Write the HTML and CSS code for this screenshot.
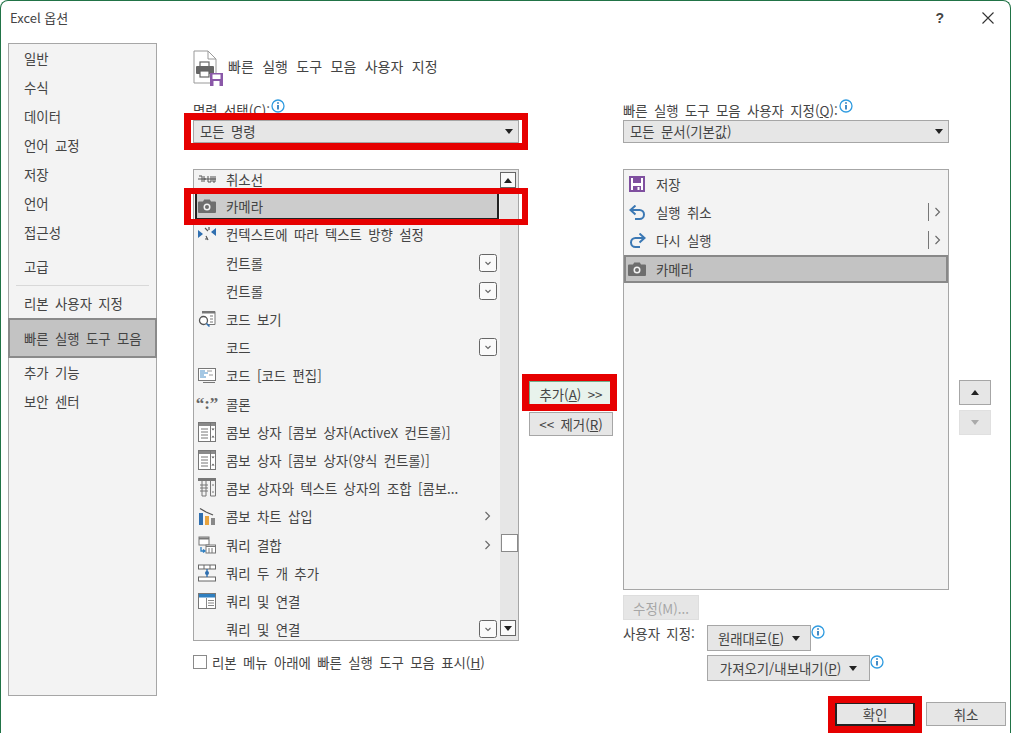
FILE: index.html
```html
<!DOCTYPE html>
<html lang="ko">
<head>
    <meta charset="UTF-8">
    <title>Excel 옵션</title>
    <link rel="stylesheet" href="styles.css">
</head>
<body>
<svg class="defs" width="0" height="0">
    <symbol id="camera" viewBox="0 0 18 14">
        <path d="M1 2.500h4l1.200-2h5.600l1.200 2h4a1 1 0 0 1 1 1V13a1 1 0 0 1-1 1H1a1 1 0 0 1-1-1V3.500a1 1 0 0 1 1-1z" fill="#6e6e6e"/>
        <circle cx="9" cy="8" r="3.500" fill="#f3f3f3"/>
        <circle cx="9" cy="8" r="2" fill="#6e6e6e"/>
    </symbol>
    <symbol id="combo" viewBox="0 0 18 20">
        <rect x="0.500" y="0.500" width="17" height="19" fill="#fff" stroke="#777"/>
        <rect x="1" y="1" width="16" height="3" fill="#8a8a8a"/>
        <path d="M3 7h7M3 10h7M3 13h7M3 16h7" stroke="#777"/>
        <path d="M12.500 1v18" stroke="#777"/>
        <path d="M13.500 6.500h3l-1.500 2zM13.500 15.500h3l-1.500-2z" fill="#555"/>
    </symbol>
    <symbol id="info" viewBox="0 0 14 14">
        <circle cx="7" cy="7" r="6" fill="#fff" stroke="#2f9be0" stroke-width="1.300"/>
        <path d="M7 6v4.500" stroke="#2f7fc0" stroke-width="1.800"/>
        <path d="M7 3.200v1.600" stroke="#2f7fc0" stroke-width="1.800"/>
    </symbol>
    <symbol id="chev-down" viewBox="0 0 18 18">
        <rect x="0.500" y="0.500" width="17" height="17" rx="2" fill="#fafafa" stroke="#666"/>
        <path d="M6.500 8l2.500 2.500L11.500 8" fill="none" stroke="#666" stroke-width="1.100"/>
    </symbol>
    <symbol id="chev-right" viewBox="0 0 8 10">
        <path d="M1.500 1l4 4-4 4" fill="none" stroke="#666" stroke-width="1.100"/>
    </symbol>
</svg>

<div class="dialog">
    <div class="titlebar">
        <span class="title">Excel 옵션</span>
        <span class="help">?</span>
        <svg class="close" width="12" height="12" viewBox="0 0 12 12"><path d="M.5.500l11 11M11.500.500l-11 11" stroke="#333" stroke-width="1.100"/></svg>
    </div>

    <div class="body">
        <div class="sidebar">
            <div class="nav">일반</div>
            <div class="nav">수식</div>
            <div class="nav">데이터</div>
            <div class="nav">언어 교정</div>
            <div class="nav">저장</div>
            <div class="nav">언어</div>
            <div class="nav">접근성</div>
            <div class="nav nav-gap">고급</div>
            <div class="nav-sep"></div>
            <div class="nav">리본 사용자 지정</div>
            <div class="nav nav-active">빠른 실행 도구 모음</div>
            <div class="nav">추가 기능</div>
            <div class="nav">보안 센터</div>
        </div>

        <div class="main">
            <div class="heading">
                <svg width="32" height="36" viewBox="0 0 32 36">
                    <path d="M1 1h14l8 8v24H1z" fill="#fff" stroke="#999"/>
                    <path d="M15 1v8h8" fill="none" stroke="#999"/>
                    <rect x="7" y="12" width="9" height="5" fill="#fff" stroke="#666" stroke-width="1.200"/>
                    <rect x="3" y="16" width="18" height="8" rx="1" fill="#666"/>
                    <rect x="7" y="21" width="9" height="6" fill="#fff" stroke="#666" stroke-width="1.200"/>
                    <rect x="17" y="23" width="13" height="13" fill="#8a58a8"/>
                    <rect x="19.500" y="24.500" width="8" height="4.500" fill="#fff"/>
                    <rect x="20.500" y="31" width="6" height="5" fill="#fff"/>
                </svg>
                <span>빠른 실행 도구 모음 사용자 지정</span>
            </div>

            <div class="columns">
                <div class="col">
                    <div class="field-label">명령 선택(<u>C</u>):<svg class="info info-label"><use href="#info"/></svg></div>
                    <div class="select red-mark mark-select">모든 명령<span class="caret"></span></div>

                    <div class="list list-left">
                        <div class="rows">
                            <div class="row row-cut">
                                <span class="ico"><svg width="18" height="10" viewBox="0 0 18 10"><path d="M1 2h3v6M6 2v6M6 5h2M10 2v6h3V2M15 2v6h2V2" fill="none" stroke="#555"/><path d="M0 5h18" stroke="#555"/></svg></span>
                                <span>취소선</span>
                            </div>
                            <div class="row row-selected red-mark mark-row">
                                <span class="ico"><svg width="18" height="14"><use href="#camera"/></svg></span>
                                <span>카메라</span>
                            </div>
                            <div class="row">
                                <span class="ico"><svg width="18" height="16" viewBox="0 0 18 16"><path d="M0 4l5 4-5 4zM18 2l-5 4 5 4z" fill="#2f6fb0"/><path d="M7 2l3 3M11 1v3M8 10l2 4M7 13h3" stroke="#555" stroke-width="1.200" fill="none"/></svg></span>
                                <span>컨텍스트에 따라 텍스트 방향 설정</span>
                            </div>
                            <div class="row">
                                <span class="ico"></span>
                                <span class="row-text">컨트롤</span>
                                <svg class="row-drop"><use href="#chev-down"/></svg>
                            </div>
                            <div class="row">
                                <span class="ico"></span>
                                <span class="row-text">컨트롤</span>
                                <svg class="row-drop"><use href="#chev-down"/></svg>
                            </div>
                            <div class="row">
                                <span class="ico"><svg width="18" height="18" viewBox="0 0 18 18"><path d="M4 1.500h13v13H9" fill="#fff" stroke="#777"/><path d="M4 1.500h13v2H4z" fill="#777"/><path d="M12 6h3M12 9h3M12 12h3" stroke="#777"/><circle cx="5.500" cy="10.500" r="4" fill="#fff" stroke="#555" stroke-width="1.300"/><path d="M8.500 13.500l3 3" stroke="#2f6fb0" stroke-width="1.600"/></svg></span>
                                <span>코드 보기</span>
                            </div>
                            <div class="row">
                                <span class="ico"></span>
                                <span class="row-text">코드</span>
                                <svg class="row-drop"><use href="#chev-down"/></svg>
                            </div>
                            <div class="row">
                                <span class="ico"><svg width="18" height="15" viewBox="0 0 18 15"><rect x="0.500" y="0.500" width="17" height="12" fill="#fff" stroke="#777"/><path d="M2 3h5M2 5h8M2 7h4M2 9h6" stroke="#4a90c8"/><path d="M9 3h5M11 7h4" stroke="#999"/><path d="M5 14.500h12" stroke="#777"/></svg></span>
                                <span>코드 [코드 편집]</span>
                            </div>
                            <div class="row">
                                <span class="ico quote-ico">“:”</span>
                                <span>콜론</span>
                            </div>
                            <div class="row">
                                <span class="ico"><svg width="18" height="20"><use href="#combo"/></svg></span>
                                <span>콤보 상자 [콤보 상자(ActiveX 컨트롤)]</span>
                            </div>
                            <div class="row">
                                <span class="ico"><svg width="18" height="20"><use href="#combo"/></svg></span>
                                <span>콤보 상자 [콤보 상자(양식 컨트롤)]</span>
                            </div>
                            <div class="row">
                                <span class="ico"><svg width="18" height="20" viewBox="0 0 18 20"><path d="M0 1.500h18" stroke="#777" stroke-width="3"/><path d="M4 3v15h4V3M2 7h8M2 10h8M2 13h8M12.500 3v15h5V3M14 7h2M14 14h2" fill="none" stroke="#777"/></svg></span>
                                <span>콤보 상자와 텍스트 상자의 조합 [콤보...</span>
                            </div>
                            <div class="row">
                                <span class="ico"><svg width="18" height="18" viewBox="0 0 18 18"><rect x="1" y="6" width="4" height="12" fill="#2f6fb0"/><rect x="7" y="9" width="4" height="9" fill="#e8a33d"/><rect x="13" y="11" width="4" height="7" fill="#888"/><path d="M2 1.500l6 3.500 7 3" fill="none" stroke="#555" stroke-width="1.300"/></svg></span>
                                <span class="row-text">콤보 차트 삽입</span>
                                <svg class="row-arrow"><use href="#chev-right"/></svg>
                            </div>
                            <div class="row">
                                <span class="ico"><svg width="18" height="18" viewBox="0 0 18 18"><rect x="1" y="1" width="10" height="8" fill="#fff" stroke="#777"/><path d="M1 2.500h10" stroke="#777" stroke-width="2"/><rect x="8" y="9" width="9.500" height="8" fill="#fff" stroke="#777"/><path d="M8 10.500h9.500M11 12v5M14 12v5" stroke="#777"/><path d="M3 11v4h3M5 13.500L7 15l-2 1.500" fill="none" stroke="#2f7fc0" stroke-width="1.300"/></svg></span>
                                <span class="row-text">쿼리 결합</span>
                                <svg class="row-arrow"><use href="#chev-right"/></svg>
                            </div>
                            <div class="row">
                                <span class="ico"><svg width="18" height="18" viewBox="0 0 18 18"><rect x="0.500" y="1" width="17" height="4" fill="#fff" stroke="#666"/><path d="M6 1v4M12 1v4M6 13v4M12 13v4" stroke="#666"/><rect x="0.500" y="13" width="17" height="4" fill="#fff" stroke="#666"/><path d="M9 5v8" stroke="#2f6fb0" stroke-width="1.400"/><circle cx="9" cy="9" r="2" fill="#2f6fb0"/></svg></span>
                                <span>쿼리 두 개 추가</span>
                            </div>
                            <div class="row">
                                <span class="ico"><svg width="18" height="16" viewBox="0 0 18 16"><rect x="0.500" y="0.500" width="17" height="15" fill="#fff" stroke="#777"/><rect x="1" y="1" width="16" height="3.500" fill="#2f7fc0"/><path d="M10 7.500h6M10 10h6M10 12.500h6M8.500 5v10" stroke="#888"/></svg></span>
                                <span>쿼리 및 연결</span>
                            </div>
                            <div class="row row-last">
                                <span class="ico"></span>
                                <span class="row-text">쿼리 및 연결</span>
                                <svg class="row-drop"><use href="#chev-down"/></svg>
                            </div>
                        </div>
                        <div class="scrollbar">
                            <div class="scroll-btn"><span class="tri-up"></span></div>
                            <div class="scroll-thumb"></div>
                            <div class="scroll-btn"><span class="tri-down"></span></div>
                        </div>
                    </div>

                    <div class="check-row">
                        <span class="checkbox"></span>
                        <span>리본 메뉴 아래에 빠른 실행 도구 모음 표시(<u>H</u>)</span>
                    </div>
                </div>

                <div class="center-btns">
                    <div class="btn btn-add red-mark mark-add"><span>추가(<u>A</u>) &gt;&gt;</span></div>
                    <div class="btn btn-remove"><span>&lt;&lt; 제거(<u>R</u>)</span></div>
                </div>

                <div class="col">
                    <div class="field-label">빠른 실행 도구 모음 사용자 지정(<u>Q</u>):<svg class="info info-label"><use href="#info"/></svg></div>
                    <div class="select">모든 문서(기본값)<span class="caret"></span></div>

                    <div class="list list-right">
                        <div class="rows">
                            <div class="row">
                                <span class="ico"><svg width="16" height="16" viewBox="0 0 16 16"><path d="M1 1h14v14H1z" fill="#fff" stroke="#7f4f9f" stroke-width="2"/><rect x="4" y="2" width="8" height="5" fill="#7f4f9f"/><rect x="4" y="10" width="8" height="5" fill="#7f4f9f"/><rect x="8.500" y="11" width="2" height="3" fill="#fff"/></svg></span>
                                <span>저장</span>
                            </div>
                            <div class="row">
                                <span class="ico"><svg width="17" height="15" viewBox="0 0 17 15"><path d="M2 5h8.500a4.500 4.500 0 0 1 0 9H6" fill="none" stroke="#3b78b4" stroke-width="2"/><path d="M6.500 0.500L1.500 5l5 4.500" fill="none" stroke="#3b78b4" stroke-width="2"/></svg></span>
                                <span class="row-text">실행 취소</span>
                                <span class="split-bar"></span>
                                <svg class="split-arrow"><use href="#chev-right"/></svg>
                            </div>
                            <div class="row">
                                <span class="ico"><svg width="17" height="15" viewBox="0 0 17 15"><path d="M15 5H6.500a4.500 4.500 0 0 0 0 9H11" fill="none" stroke="#3b78b4" stroke-width="2"/><path d="M10.500 0.500l5 4.500-5 4.500" fill="none" stroke="#3b78b4" stroke-width="2"/></svg></span>
                                <span class="row-text">다시 실행</span>
                                <span class="split-bar"></span>
                                <svg class="split-arrow"><use href="#chev-right"/></svg>
                            </div>
                            <div class="row row-current">
                                <span class="ico"><svg width="18" height="14"><use href="#camera"/></svg></span>
                                <span>카메라</span>
                            </div>
                        </div>
                    </div>

                    <div class="btn btn-edit"><span>수정(M)...</span></div>

                    <div class="customize">
                        <span class="customize-label">사용자 지정:</span>
                        <div class="btn-line">
                            <div class="btn btn-menu btn-reset"><span>원래대로(<u>E</u>)</span><span class="caret"></span></div>
                            <svg class="info"><use href="#info"/></svg>
                        </div>
                        <span></span>
                        <div class="btn-line">
                            <div class="btn btn-menu btn-import"><span>가져오기/내보내기(<u>P</u>)</span><span class="caret"></span></div>
                            <svg class="info"><use href="#info"/></svg>
                        </div>
                    </div>
                </div>

                <div class="move-btns">
                    <div class="btn btn-move"><span class="tri-up"></span></div>
                    <div class="btn btn-move btn-off"><span class="tri-down"></span></div>
                </div>
            </div>
        </div>
    </div>

    <div class="footer">
        <div class="btn btn-foot btn-ok red-mark mark-ok">확인</div>
        <div class="btn btn-foot">취소</div>
    </div>
</div>
</body>
</html>
```

FILE: styles.css
```css
* {
    box-sizing: border-box;
}
html, body {
    margin: 0;
    padding: 0;
    background: #fff;
}
body {
    font-family: "Noto Sans CJK KR", "Noto Sans", sans-serif;
    font-size: 13.4px;
    word-spacing: 2.6px;
    color: #444;
}
u {
    text-underline-offset: 1px;
}
.defs {
    position: absolute;
}
.dialog {
    width: 1011px;
    height: 733px;
    display: flex;
    flex-direction: column;
    border: 1px solid #217346;
    border-bottom: none;
    border-radius: 8px 8px 0 0;
    overflow: hidden;
}

/* title bar */
.titlebar {
    height: 36px;
    flex: none;
    display: flex;
    align-items: center;
    padding: 0 16px 3px 9px;
}
.title {
    flex: 1;
    font-size: 13px;
    word-spacing: 0;
}
.help {
    font-family: "Liberation Sans", sans-serif;
    font-size: 14px;
    font-weight: bold;
    margin-right: 38px;
}

/* sidebar */
.body {
    flex: 1;
    min-height: 0;
    display: flex;
    padding: 6px 0 0 7px;
}
.sidebar {
    width: 149px;
    height: 653px;
    flex: none;
    border: 1px solid #a6a6a6;
    background: #f3f3f3;
}
.nav {
    height: 29px;
    line-height: 29px;
    padding-left: 15px;
}
.nav-gap {
    margin-top: 5px;
}
.nav-sep {
    height: 1px;
    margin: 4px 7px 3px;
    background: #d8d8d8;
}
.nav-active {
    height: 40px;
    line-height: 36px;
    margin: 0 -1px;
    padding-left: 14px;
    background: #c3c3c3;
    border: 2px solid #8a8a8a;
}

/* main area */
.main {
    margin-left: 36px;
    flex: 1;
}
.heading {
    height: 56px;
    display: flex;
    align-items: flex-start;
    gap: 3px;
    padding-top: 7px;
    font-size: 14px;
    word-spacing: 4.5px;
}
.heading span {
    margin-top: 6px;
}
.columns {
    display: flex;
}
.col {
    width: 326px;
    flex: none;
}
.field-label {
    height: 21px;
    line-height: 16px;
    white-space: nowrap;
}
.info {
    width: 14px;
    height: 14px;
    flex: none;
}
.info-label {
    margin-left: 1px;
    vertical-align: 3px;
}
.select {
    height: 23px;
    padding: 0 0 1px 6px;
    display: flex;
    justify-content: space-between;
    align-items: center;
    background: #e6e6e6;
    border: 1px solid #a6a6a6;
}
.caret {
    width: 0;
    height: 0;
    margin-right: 5px;
    border-left: 4px solid transparent;
    border-right: 4px solid transparent;
    border-top: 5px solid #222;
}

/* lists */
.list {
    display: flex;
    margin-top: 26px;
    background: #f3f3f3;
    border: 1px solid #a6a6a6;
}
.list-left {
    height: 472px;
}
.list-right {
    height: 421px;
}
.rows {
    flex: 1;
    min-width: 0;
}
.row {
    height: 28.2px;
    display: flex;
    align-items: center;
    padding-left: 4px;
    white-space: nowrap;
}
/* first row is scrolled partly out of view */
.row-cut {
    height: 22.2px;
    line-height: 18px;
    align-items: flex-start;
}
.row-last {
    height: 24px;
    padding-top: 3px;
}
.row-selected {
    background: #ccc;
    outline: 2px solid #222;
    outline-offset: -2px;
    margin-left: 1px;
    padding-left: 3px;
    margin-right: 1px;
}
.row-current {
    background: #c3c3c3;
    outline: 2px solid #888;
    outline-offset: -2px;
}
.ico {
    width: 18px;
    height: 20px;
    margin-right: 10px;
    flex: none;
    display: flex;
    align-items: center;
    justify-content: center;
}
.row-cut .ico {
    height: 18px;
}
.quote-ico {
    font-family: "Liberation Serif", serif;
    font-size: 17px;
    font-weight: bold;
    color: #666;
}
.row-text {
    flex: 1;
}
.row-drop {
    width: 18px;
    height: 18px;
    margin-right: 3px;
}
.row-arrow {
    width: 8px;
    height: 10px;
    margin-right: 8px;
}
.split-bar {
    width: 1px;
    height: 18px;
    margin-right: 5px;
    background: #777;
}
.split-arrow {
    width: 8px;
    height: 10px;
    margin-right: 6px;
}

/* scrollbar */
.scrollbar {
    width: 18px;
    flex: none;
    display: flex;
    flex-direction: column;
    padding: 2px 2px 2px 0;
    background: #e6e6e6;
}
.scroll-btn {
    width: 16px;
    height: 16px;
    display: flex;
    align-items: center;
    justify-content: center;
    background: #fafafa;
    border: 1px solid #666;
}
.scroll-thumb {
    width: 17px;
    height: 18px;
    margin: 346px -1px 68px 1px;
    background: #fff;
    border: 1px solid #8a8a8a;
}
.tri-up, .tri-down {
    width: 0;
    height: 0;
    border-left: 4px solid transparent;
    border-right: 4px solid transparent;
}
.tri-up {
    border-bottom: 5px solid #222;
}
.tri-down {
    border-top: 5px solid #222;
}

.check-row {
    display: flex;
    align-items: center;
    gap: 5px;
    margin-top: 11px;
    height: 20px;
}
.checkbox {
    width: 14px;
    height: 14px;
    background: #fff;
    border: 1px solid #8a8a8a;
}

/* buttons */
.btn {
    display: flex;
    align-items: center;
    justify-content: center;
    background: #e6e6e6;
    border: 1px solid #a6a6a6;
    white-space: nowrap;
}
.center-btns {
    width: 84px;
    flex: none;
    margin: 0 10px;
    padding-top: 282px;
}
.btn-add {
    height: 25px;
    background: #e8f3ec;
    border-color: #6fae8a;
}
.btn-remove {
    height: 24px;
    margin-top: 6px;
}
.move-btns {
    width: 32px;
    flex: none;
    margin-left: 10px;
    padding-top: 281px;
}
.btn-move {
    height: 25px;
    margin-bottom: 5px;
}
.btn-off {
    border-color: #e0e0e0;
}
.btn-off .tri-down {
    border-top-color: #aaa;
}
.btn-edit {
    width: 76px;
    height: 25px;
    margin-top: 5px;
    color: #a6a6a6;
    border-color: #dedede;
}
.customize {
    display: grid;
    grid-template-columns: 84px auto;
    row-gap: 4px;
    margin-top: 5px;
}
.customize-label {
    line-height: 16px;
}
.btn-line {
    display: flex;
}
.btn-menu {
    height: 26px;
    gap: 8px;
}
.btn-menu .caret {
    margin-right: 0;
}
.btn-reset {
    width: 104px;
}
.btn-import {
    width: 163px;
}

.footer {
    height: 37px;
    flex: none;
    display: flex;
    justify-content: flex-end;
    gap: 11px;
    padding: 6px 4px 0 0;
}
.btn-foot {
    width: 80px;
    height: 24px;
}
.btn-ok {
    border: 2px solid #222;
}

/* red annotation boxes drawn over the screenshot */
.red-mark {
    position: relative;
}
.red-mark::after {
    content: "";
    position: absolute;
    border: 7px solid #e60000;
}
.mark-select::after {
    inset: -8px -10px -8px -10px;
    border-right-width: 6px;
}
.mark-row::after {
    inset: -4px -29px -5px -11px;
    border-width: 6px 6px 6px 7px;
}
.mark-add::after {
    inset: -8px -5px -6px -8px;
}
.mark-ok::after {
    inset: -8px -9px -9px -9px;
}
```
